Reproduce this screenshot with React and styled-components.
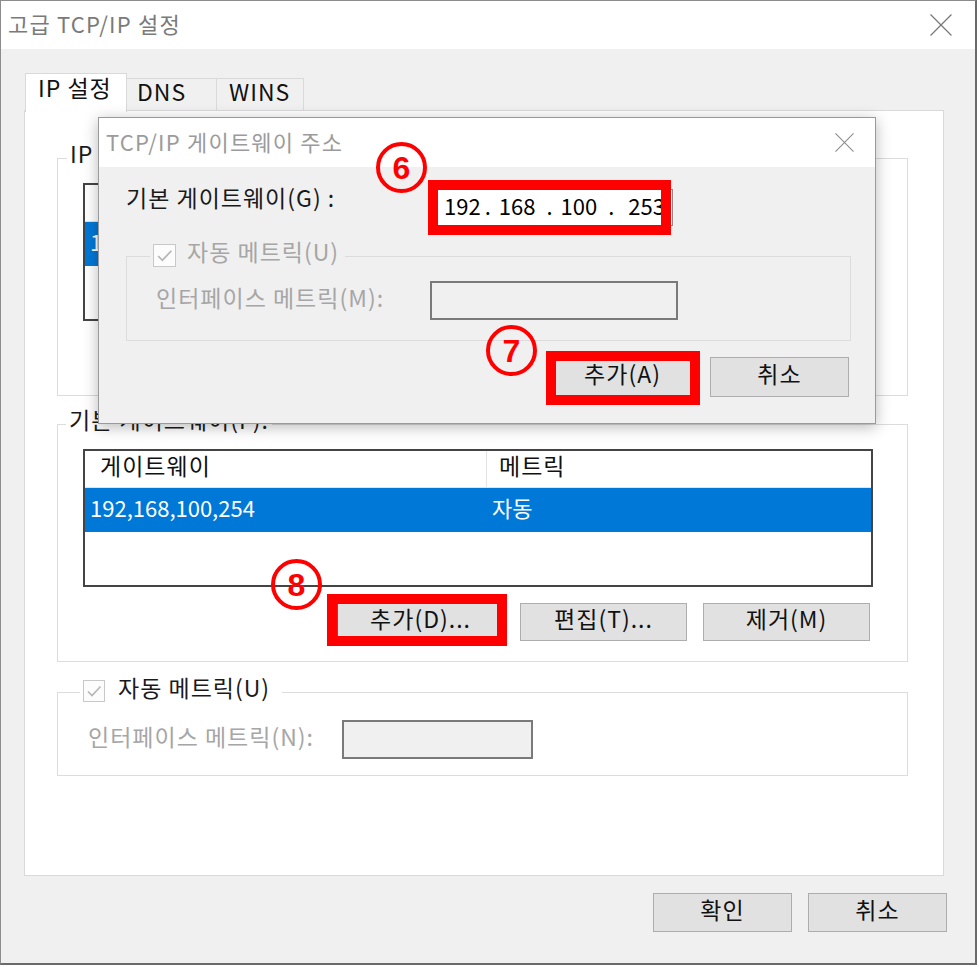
import React from "react";
import styled, { createGlobalStyle } from "styled-components";

const FONT = `"Noto Sans CJK KR", "Noto Sans", sans-serif`;
const RED = "#ff0000";

const GlobalStyle = createGlobalStyle`
  *, *::before, *::after { box-sizing: border-box; }
  html, body { margin: 0; padding: 0; background: #ffffff; }
  body { font-family: ${FONT}; }
`;

const Window = styled.div`
  position: relative;
  width: 977px;
  height: 965px;
  display: flex;
  flex-direction: column;
  background: #f0f0f0;
  border-top: 1px solid #8c8c8c;
  border-left: 1px solid #8c8c8c;
  border-right: 2px solid #6a6a6a;
  border-bottom: 2px solid #6a6a6a;
  font-family: ${FONT};
  font-size: 23px;
  letter-spacing: 1px;
  color: #1a1a1a;
`;

const TitleBar = styled.div`
  height: ${(p) => p.$h}px;
  flex: none;
  display: flex;
  align-items: center;
  justify-content: space-between;
  background: #ffffff;
  padding: 0 ${(p) => p.$pr}px 0 7px;
`;

const TitleText = styled.span`
  font-size: 22px;
  letter-spacing: 1.2px;
  line-height: 1;
  padding-bottom: 4px;
  color: ${(p) => p.$color};
`;

const CloseSvg = styled.svg`
  flex: none;
  display: block;
`;

const CloseIcon = ({ size, color }) => (
  <CloseSvg width={size} height={size} viewBox="0 0 20 20">
    <path d="M0.5 0.5 L19.5 19.5 M19.5 0.5 L0.5 19.5" stroke={color} strokeWidth="1.1" fill="none" />
  </CloseSvg>
);

const Body = styled.div`
  flex: 1;
  display: flex;
  flex-direction: column;
  align-items: flex-start;
  padding: 24px 0 0 23px;
`;

const TabRow = styled.div`
  display: flex;
  align-items: flex-end;
  height: 37px;
  margin-left: 1px;
`;

const Tab = styled.div`
  position: relative;
  z-index: ${(p) => (p.$active ? 2 : 0)};
  width: ${(p) => p.$w}px;
  height: ${(p) => (p.$active ? 39 : 32)}px;
  margin-bottom: ${(p) => (p.$active ? -2 : 0)}px;
  background: ${(p) => (p.$active ? "#ffffff" : "#f0f0f0")};
  border: 1px solid #d9d9d9;
  border-bottom: none;
  border-left: ${(p) => (p.$active ? "1px solid #d9d9d9" : "none")};
  display: flex;
  align-items: center;
  padding-left: ${(p) => p.$pl}px;
  padding-bottom: ${(p) => (p.$active ? 11 : 6)}px;
  line-height: 1;
  color: #111;
`;

const Panel = styled.div`
  width: 920px;
  height: 766px;
  background: #ffffff;
  border: 1px solid #d9d9d9;
  padding-left: 32px;
  display: flex;
  flex-direction: column;
`;

const Group = styled.div`
  width: ${(p) => p.$w}px;
  margin-top: ${(p) => p.$mt}px;
  border: 1px solid #dcdcdc;
  padding: 0 0 ${(p) => p.$pb}px ${(p) => p.$pl}px;
  display: flex;
  flex-direction: column;
  align-items: flex-start;
`;

const Legend = styled.div`
  height: 30px;
  margin: -17px 0 0 ${(p) => p.$ml}px;
  padding: 0 ${(p) => p.$pr ?? 3}px 0 3px;
  background: ${(p) => p.$bg};
  display: flex;
  align-items: center;
  gap: ${(p) => p.$gap ?? 0}px;
  line-height: 1;
  color: ${(p) => p.$color ?? "#1a1a1a"};
  white-space: nowrap;
`;

const LegendText = styled.span`
  padding-bottom: 7px;
`;

const ListBox = styled.div`
  width: 790px;
  height: 138px;
  margin-top: 11px;
  background: #ffffff;
  border: 2px solid #444444;
  display: flex;
  flex-direction: column;
  overflow: hidden;
`;

const ListHeader = styled.div`
  height: 37px;
  flex: none;
  display: flex;
  border-bottom: 1px solid #e3e3e3;
`;

const HeaderCell = styled.div`
  width: ${(p) => (p.$w ? `${p.$w}px` : "auto")};
  flex: ${(p) => (p.$w ? "none" : "1")};
  display: flex;
  align-items: center;
  padding-left: ${(p) => p.$pl}px;
  padding-bottom: 7px;
  border-right: ${(p) => (p.$w ? "1px solid #e3e3e3" : "none")};
  line-height: 1;
  color: #111;
`;

const ListRow = styled.div`
  height: 44px;
  flex: none;
  display: flex;
  background: ${(p) => (p.$selected ? "#0078d7" : "transparent")};
  color: ${(p) => (p.$selected ? "#ffffff" : "#111")};
`;

const RowCell = styled.div`
  width: ${(p) => (p.$w ? `${p.$w}px` : "auto")};
  flex: ${(p) => (p.$w ? "none" : "1")};
  display: flex;
  align-items: center;
  padding-left: ${(p) => p.$pl}px;
  padding-bottom: 6px;
  font-size: 22px;
  letter-spacing: 0;
  line-height: 1;
  white-space: nowrap;
`;

const ButtonRow = styled.div`
  width: ${(p) => p.$w}px;
  margin-top: ${(p) => p.$mt}px;
  display: flex;
  justify-content: flex-end;
  gap: ${(p) => p.$gap}px;
`;

const Button = styled.div`
  position: relative;
  width: ${(p) => p.$w}px;
  height: ${(p) => p.$h}px;
  background: #e1e1e1;
  border: 1px solid ${(p) => (p.$focus ? "#0078d7" : "#adadad")};
  display: flex;
  align-items: center;
  justify-content: center;
  padding-bottom: 7px;
  line-height: 1;
  color: #111;
  white-space: nowrap;
`;

const RedFrame = styled.span`
  position: absolute;
  left: ${(p) => p.$l}px;
  top: ${(p) => p.$t}px;
  right: ${(p) => p.$r}px;
  bottom: ${(p) => p.$b}px;
  border: 10px solid ${RED};
  pointer-events: none;
  z-index: 3;
`;

const FieldRow = styled.div`
  display: flex;
  align-items: center;
  height: 39px;
  margin-top: ${(p) => p.$mt}px;
  padding-left: ${(p) => p.$pl}px;
`;

const FieldLabel = styled.span`
  width: ${(p) => p.$w}px;
  flex: none;
  padding-bottom: 7px;
  line-height: 1;
  color: ${(p) => p.$color};
  white-space: nowrap;
`;

const DisabledInput = styled.div`
  width: ${(p) => p.$w}px;
  height: 39px;
  background: #f0f0f0;
  border: 2px solid #7a7a7a;
  flex: none;
`;

const CheckBoxBox = styled.span`
  width: ${(p) => p.$s}px;
  height: ${(p) => p.$s}px;
  flex: none;
  border: 1px solid #c8c8c8;
  background: #fcfcfc;
  display: flex;
  align-items: center;
  justify-content: center;
`;

const CheckBox = ({ size }) => (
  <CheckBoxBox $s={size}>
    <svg width={size - 4} height={size - 4} viewBox="0 0 18 18">
      <path d="M3 9.5 L7 13.5 L15.5 4.5" stroke="#b5b5b5" strokeWidth="1.6" fill="none" />
    </svg>
  </CheckBoxBox>
);

const FooterRow = styled.div`
  width: 923px;
  margin-top: 17px;
  display: flex;
  justify-content: flex-end;
  gap: 16px;
`;

const Dialog = styled.div`
  position: absolute;
  left: 97px;
  top: 116px;
  width: 778px;
  height: 307px;
  z-index: 4;
  display: flex;
  flex-direction: column;
  border: 1px solid #9a9a9a;
  background: #f0f0f0;
  box-shadow: 0 3px 14px rgba(0, 0, 0, 0.28);
`;

const DialogBody = styled.div`
  flex: 1;
  display: flex;
  flex-direction: column;
  align-items: flex-start;
  padding: 22px 26px 0 27px;
`;

const GatewayRow = styled.div`
  display: flex;
  height: 37px;
`;

const GatewayLabel = styled.span`
  width: 306px;
  flex: none;
  align-self: flex-start;
  margin-top: -4px;
  line-height: 24px;
  color: #1a1a1a;
  white-space: pre;
`;

const IpField = styled.div`
  position: relative;
  width: 241px;
  height: 37px;
  background: #ffffff;
  border: 1px solid #8a8a8a;
  display: flex;
  align-items: center;
  padding-left: 11px;
  padding-bottom: 6px;
  font-size: 22px;
  letter-spacing: 0;
  line-height: 1;
  color: #000;
  white-space: nowrap;
`;

const Octet = styled.span`
  flex: none;
`;

const Dot = styled.span`
  flex: none;
  margin: 0 ${(p) => p.$mr}px 0 ${(p) => p.$ml}px;
`;

const Circle = styled.div`
  position: absolute;
  left: ${(p) => p.$x}px;
  top: ${(p) => p.$y}px;
  width: 51px;
  height: 51px;
  z-index: 6;
  border-radius: 50%;
  border: 4px solid ${RED};
  display: flex;
  align-items: center;
  justify-content: center;
  font-family: "Liberation Sans", Arial, sans-serif;
  font-weight: 700;
  font-size: 32px;
  letter-spacing: 0;
  line-height: 1;
  color: ${RED};
`;

const AddressList = ({ cols, row }) => (
  <ListBox>
    <ListHeader>
      <HeaderCell $w={402} $pl={15}>{cols[0]}</HeaderCell>
      <HeaderCell $pl={12}>{cols[1]}</HeaderCell>
    </ListHeader>
    <ListRow $selected>
      <RowCell $w={402} $pl={5}>{row[0]}</RowCell>
      <RowCell $pl={5}>{row[1]}</RowCell>
    </ListRow>
  </ListBox>
);

export default function App() {
  return (
    <>
      <GlobalStyle />
      <Window>
        <TitleBar $h={48} $pr={23}>
          <TitleText $color="#7a7a7a">고급 TCP/IP 설정</TitleText>
          <CloseIcon size={22} color="#777777" />
        </TitleBar>
        <Body>
          <TabRow>
            <Tab $active $w={102} $pl={12}>IP 설정</Tab>
            <Tab $w={90} $pl={10}>DNS</Tab>
            <Tab $w={87} $pl={12}>WINS</Tab>
          </TabRow>
          <Panel>
            <Group $w={851} $mt={47} $pl={25} $pb={20}>
              <Legend $ml={-16} $bg="#ffffff">
                <LegendText>IP 주소(R)</LegendText>
              </Legend>
              <AddressList cols={["IP 주소", "서브넷 마스크"]} row={["192,168,100,100", "255,255,255,0"]} />
              <ButtonRow $w={787} $mt={16} $gap={16}>
                <Button $w={167} $h={38}>추가(A)...</Button>
                <Button $w={167} $h={38}>편집(E)...</Button>
                <Button $w={167} $h={38}>제거(V)</Button>
              </ButtonRow>
            </Group>
            <Group $w={851} $mt={28} $pl={25} $pb={20}>
              <Legend $ml={-17} $bg="#ffffff">
                <LegendText>기본 게이트웨이(F):</LegendText>
              </Legend>
              <AddressList cols={["게이트웨이", "메트릭"]} row={["192,168,100,254", "자동"]} />
              <ButtonRow $w={787} $mt={16} $gap={16}>
                <Button $w={167} $h={38} $focus>
                  추가(D)...
                  <RedFrame $l={-11} $t={-10} $r={-4} $b={-6} />
                </Button>
                <Button $w={167} $h={38}>편집(T)...</Button>
                <Button $w={167} $h={38}>제거(M)</Button>
              </ButtonRow>
            </Group>
            <Group $w={851} $mt={30} $pl={25} $pb={16}>
              <Legend $ml={-3} $bg="#ffffff" $gap={13} $pr={12}>
                <CheckBox size={22} />
                <LegendText>자동 메트릭(U)</LegendText>
              </Legend>
              <FieldRow $mt={14} $pl={5}>
                <FieldLabel $w={254} $color="#a6a6a6">인터페이스 메트릭(N):</FieldLabel>
                <DisabledInput $w={191} />
              </FieldRow>
            </Group>
          </Panel>
          <FooterRow>
            <Button $w={139} $h={39}>확인</Button>
            <Button $w={139} $h={39}>취소</Button>
          </FooterRow>
        </Body>

        <Dialog>
          <TitleBar $h={49} $pr={21}>
            <TitleText $color="#9b9b9b">TCP/IP 게이트웨이 주소</TitleText>
            <CloseIcon size={19} color="#8a8a8a" />
          </TitleBar>
          <DialogBody>
            <GatewayRow>
              <GatewayLabel>기본 게이트웨이(G) :</GatewayLabel>
              <IpField>
                <Octet>192</Octet>
                <Dot $ml={4} $mr={8}>.</Dot>
                <Octet>168</Octet>
                <Dot $ml={11} $mr={8}>.</Dot>
                <Octet>100</Octet>
                <Dot $ml={11} $mr={14}>.</Dot>
                <Octet>253</Octet>
                <RedFrame $l={-5} $t={-10} $r={1} $b={-10} />
              </IpField>
            </GatewayRow>
            <Group $w={725} $mt={30} $pl={29} $pb={20}>
              <Legend $ml={-6} $bg="#f0f0f0" $gap={11} $pr={6} $color="#a6a6a6">
                <CheckBox size={23} />
                <LegendText>자동 메트릭(U)</LegendText>
              </Legend>
              <FieldRow $mt={11} $pl={0}>
                <FieldLabel $w={274} $color="#a6a6a6">인터페이스 메트릭(M):</FieldLabel>
                <DisabledInput $w={248} />
              </FieldRow>
            </Group>
            <ButtonRow $w={723} $mt={16} $gap={18}>
              <Button $w={139} $h={40} $focus>
                추가(A)
                <RedFrame $l={-8} $t={-7} $r={-9} $b={-9} />
              </Button>
              <Button $w={139} $h={40}>취소</Button>
            </ButtonRow>
          </DialogBody>
        </Dialog>

        <Circle $x={375} $y={141}>6</Circle>
        <Circle $x={485} $y={324}>7</Circle>
        <Circle $x={270} $y={558}>8</Circle>
      </Window>
    </>
  );
}
